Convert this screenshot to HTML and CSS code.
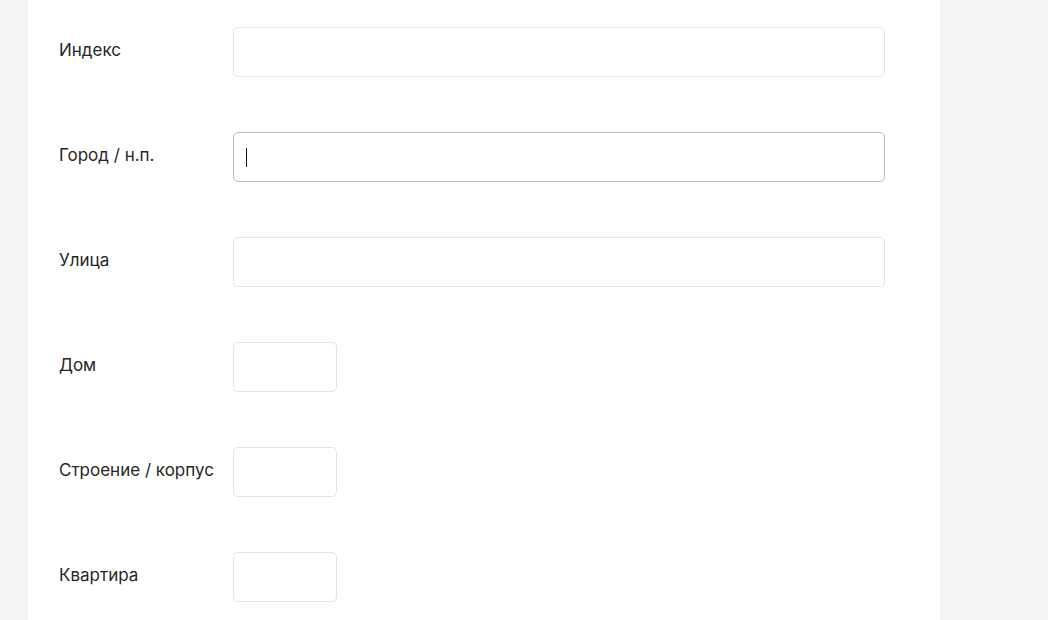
FILE: index.html
```html
<!DOCTYPE html>
<html lang="ru">
<head>
<meta charset="utf-8">
<title>Адрес</title>
<link rel="stylesheet" href="styles.css">
</head>
<body>
<div class="page">
  <div class="panel">
    <form class="form">
      <div class="row">
        <label class="label">Индекс</label>
        <div class="field wide"></div>
      </div>
      <div class="row">
        <label class="label">Город / н.п.</label>
        <div class="field wide focused"><span class="caret"></span></div>
      </div>
      <div class="row">
        <label class="label">Улица</label>
        <div class="field wide"></div>
      </div>
      <div class="row">
        <label class="label">Дом</label>
        <div class="field short"></div>
      </div>
      <div class="row">
        <label class="label">Строение / корпус</label>
        <div class="field short"></div>
      </div>
      <div class="row">
        <label class="label">Квартира</label>
        <div class="field short"></div>
      </div>
    </form>
  </div>
</div>
</body>
</html>
```
FILE: styles.css
```css
html, body {
  margin: 0;
  padding: 0;
  height: 100%;
}
body {
  background: #f3f4f6;
  font-family: Inter, "Noto Sans", "Liberation Sans", sans-serif;
  color: #222;
  overflow: hidden;
}
.page {
  padding-left: 28px;
  height: 100%;
}
.panel {
  width: 912px;
  height: 100%;
  background: #ffffff;
  box-sizing: border-box;
  padding: 27px 0 0 31px;
}
.form {
  display: flex;
  flex-direction: column;
  gap: 55px;
}
.row {
  display: flex;
  align-items: center;
  height: 50px;
}
.label {
  width: 174px;
  flex: none;
  font-size: 17px;
  line-height: 20px;
  margin-top: -4px;
  color: #262626;
}
.field {
  box-sizing: border-box;
  height: 50px;
  border: 1px solid #e3e4e6;
  border-radius: 5px;
  background: #fff;
  display: flex;
  align-items: center;
  padding-left: 12px;
}
.wide {
  width: 652px;
}
.short {
  width: 104px;
}
.focused {
  border-color: #b9bdbf;
}
.caret {
  display: block;
  width: 1px;
  height: 19px;
  background: #111;
}
```
